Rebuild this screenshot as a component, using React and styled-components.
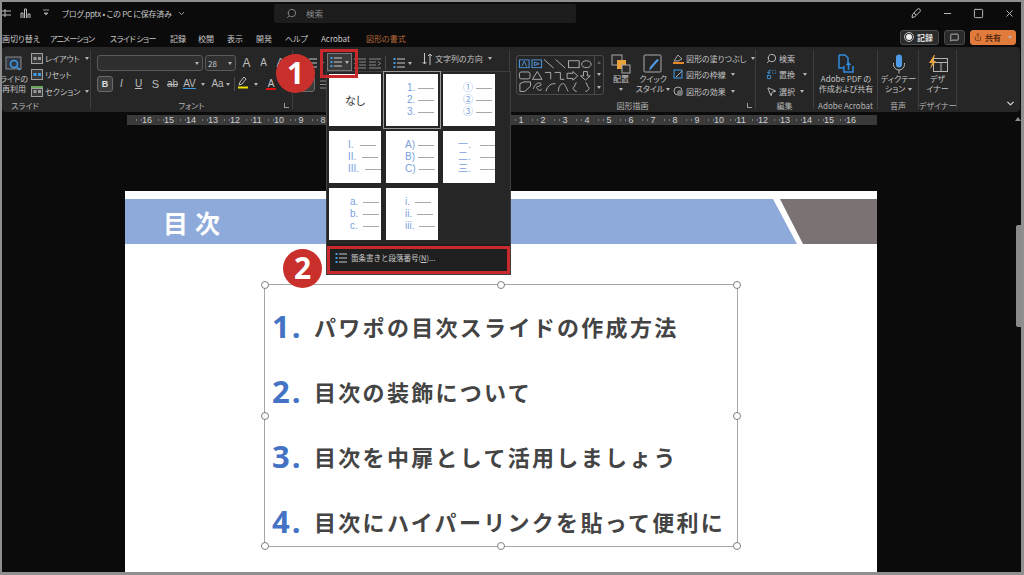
import React from "react";
import styled, { createGlobalStyle } from "styled-components";
import { Search, ChevronDown, Minus, Square, X, MessageSquare, Share, Replace, MousePointer2 } from "lucide-react";

const GlobalStyle = createGlobalStyle`
  html, body {
    margin: 0;
    padding: 0;
    background: #0b0b0b;
    overflow: hidden;
  }
  * { box-sizing: border-box; }
`;

const FONT = `"Noto Sans CJK JP", "Noto Sans", sans-serif`;

const Window = styled.div`
  position: relative;
  width: 1024px;
  height: 575px;
  overflow: hidden;
  background: #0b0b0b;
  border-top: 2px solid #8f8f8f;
  border-left: 2px solid #8f8f8f;
  border-right: 3px solid #8f8f8f;
  border-bottom: 3px solid #8f8f8f;
  color: #cfcfcf;
  font-family: ${FONT};
  font-feature-settings: "palt";
  display: flex;
  flex-direction: column;
`;

const TitleBar = styled.div`
  height: 24px;
  padding-bottom: 2px;
  display: flex;
  align-items: center;
  flex-shrink: 0;
`;
const QuickIcons = styled.div`
  width: 60px;
  display: flex;
  align-items: center;
  gap: 9px;
  color: #bbb;
`;
const DocName = styled.div`
  width: 212px;
  font-size: 8px;
  letter-spacing: -0.25px;
  color: #c8c8c8;
  display: flex;
  align-items: center;
  gap: 5px;
`;
const SearchBox = styled.div`
  width: 302px;
  height: 19px;
  background: #1d1d1d;
  border-radius: 2px;
  display: flex;
  align-items: center;
  gap: 9px;
  padding-left: 12px;
  font-size: 8.5px;
  color: #8a8a8a;
`;
const WindowButtons = styled.div`
  margin-left: auto;
  display: flex;
  align-items: center;
  gap: 20px;
  padding-right: 6px;
  color: #c6c6c6;
`;

const MenuBar = styled.div`
  height: 21px;
  padding-top: 3px;
  flex-shrink: 0;
  display: flex;
  align-items: center;
  font-size: 8px;
`;
const MenuItem = styled.span`
  width: ${(p) => p.$w}px;
  flex-shrink: 0;
  white-space: nowrap;
  letter-spacing: ${(p) => p.$ls || 0}px;
  color: ${(p) => p.$accent || "#c8c8c8"};
`;
const MenuActions = styled.div`
  margin-left: auto;
  display: flex;
  align-items: center;
  gap: 5px;
  padding-right: 5px;
  margin-top: -2px;
`;
const ActionButton = styled.div`
  height: 15px;
  width: ${(p) => p.$w}px;
  border-radius: 3px;
  border: 1px solid ${(p) => (p.$orange ? "#e07b3c" : "#4a4a4a")};
  background: ${(p) => (p.$orange ? "#e07b3c" : "#2a2a2a")};
  color: ${(p) => (p.$orange ? "#5a2c12" : "#ddd")};
  font-size: 8px;
  font-weight: 700;
  display: flex;
  align-items: center;
  justify-content: center;
  gap: 3px;
`;
const RecordDot = styled.span`
  width: 6px;
  height: 6px;
  border-radius: 50%;
  background: #eee;
  outline: 1px solid #bbb;
  outline-offset: 1px;
  margin-right: 2px;
`;

const Ribbon = styled.div`
  height: 65px;
  flex-shrink: 0;
  background: #262626;
  border-radius: 4px;
  margin-right: 1px;
  display: flex;
  align-items: flex-start;
`;
const Group = styled.div`
  width: ${(p) => p.$w}px;
  height: 59px;
  flex-shrink: 0;
  position: relative;
  margin-top: 3px;
  padding: 0 ${(p) => p.$pad ?? 4}px;
  display: flex;
  flex-direction: column;
  border-right: 1px solid #3d3d3d;
`;
const GroupBody = styled.div`
  height: 50px;
  flex-shrink: 0;
  display: flex;
`;
const GroupLabel = styled.div`
  height: 12px;
  font-size: 8px;
  line-height: 12px;
  text-align: center;
  color: #b4b4b4;
  white-space: nowrap;
  width: ${(p) => (p.$w ? `${p.$w}px` : "auto")};
`;
const Launcher = styled.span`
  position: absolute;
  right: 3px;
  bottom: 1px;
  width: 5px;
  height: 5px;
  border-left: 1px solid #9a9a9a;
  border-bottom: 1px solid #9a9a9a;
`;
const Stack = styled.div`
  display: flex;
  flex-direction: column;
  margin-left: ${(p) => p.$ml || 0}px;
`;
const FontRows = styled.div`
  display: flex;
  flex-direction: column;
  gap: 5px;
  padding-top: 5px;
  margin-left: ${(p) => p.$ml || 0}px;
`;
const SmallRow = styled.div`
  height: 16.5px;
  display: flex;
  align-items: center;
  gap: ${(p) => p.$gap ?? 2}px;
  font-size: 8px;
  color: #c4c4c4;
  white-space: nowrap;
`;
const ToolRow = styled.div`
  height: 16px;
  display: flex;
  align-items: center;
  margin-left: ${(p) => p.$ml || 0}px;
  color: #c4c4c4;
  font-size: 8px;
  white-space: nowrap;
`;
const Spacer = styled.span`
  width: ${(p) => p.$w}px;
  flex-shrink: 0;
`;
const BigButton = styled.div`
  width: ${(p) => p.$w}px;
  padding-top: 3px;
  flex-shrink: 0;
  display: flex;
  flex-direction: column;
  align-items: center;
  font-size: 8px;
  line-height: 10px;
  color: #c4c4c4;
  text-align: center;
  white-space: nowrap;
`;
const IconSlot = styled.div`
  height: 21px;
  display: flex;
  align-items: center;
  justify-content: center;
`;
const Caret = styled.span`
  display: inline-block;
  width: 0;
  height: 0;
  vertical-align: middle;
  border-left: 2.5px solid transparent;
  border-right: 2.5px solid transparent;
  border-top: 3px solid #b5b5b5;
  margin-left: ${(p) => p.$ml ?? 3}px;
`;
const Field = styled.div`
  width: ${(p) => p.$w}px;
  height: 16px;
  margin-right: 2px;
  flex-shrink: 0;
  border: 1px solid #5a5a5a;
  border-radius: 3px;
  background: #2e2e2e;
  display: flex;
  align-items: center;
  justify-content: space-between;
  padding: 0 3px 0 2px;
  font-size: 8px;
  color: #c8c8c8;
`;
const ToggleButton = styled.span`
  width: 16px;
  height: 16px;
  flex-shrink: 0;
  border: 1px solid #6b6b6b;
  border-radius: 3px;
  background: #3c3c3c;
  display: flex;
  align-items: center;
  justify-content: center;
  color: #ddd;
  font-family: "Liberation Sans", sans-serif;
  font-size: 9px;
  font-weight: 700;
`;
const ToolCell = styled.span`
  width: ${(p) => p.$w || 17}px;
  flex-shrink: 0;
  text-align: center;
  font-family: "Liberation Sans", sans-serif;
  font-size: ${(p) => p.$size || 10}px;
  font-weight: 400;
  font-style: ${(p) => (p.$italic ? "italic" : "normal")};
  text-decoration: ${(p) => p.$deco || "none"};
  color: #bdbdbd;
  line-height: 12px;
`;
const UnderlinedAV = styled.span`
  border-bottom: 1.5px solid #3f9be6;
  line-height: 9px;
  display: inline-block;
`;
const ColorA = styled.span`
  display: block;
  margin: 0 auto;
  width: 10px;
  font-size: 10px;
  line-height: 9px;
  border-bottom: 2px solid ${(p) => p.$color};
  color: #c8c8c8;
`;
const RowDivider = styled.span`
  width: 1px;
  height: 14px;
  flex-shrink: 0;
  background: #4a4a4a;
  margin: 0 ${(p) => p.$m || 0}px;
`;
const DirectionLabel = styled.span`
  display: flex;
  align-items: center;
  gap: 2px;
  margin: -9px 0 0 2px;
`;
const DirectionIcon = styled.svg`
  margin-top: -9px;
  flex-shrink: 0;
`;
const ShapeGallery = styled.div`
  width: 88px;
  height: 40px;
  margin: 5px 1px 0 2px;
  border: 1px solid #4a4a4a;
  border-radius: 3px;
  display: flex;
  flex-shrink: 0;
`;
const ShapeScroll = styled.div`
  width: 9px;
  margin-left: auto;
  display: grid;
  grid-template-rows: repeat(3, 1fr);
  border-left: 1px solid #4a4a4a;
  justify-items: center;
  align-items: center;
`;

const Ruler = styled.div`
  margin: 3px 0 0 125px;
  width: 750px;
  height: 10px;
  flex-shrink: 0;
  background: #3a3a3a;
  display: flex;
  padding-left: 9px;
  font-family: "Liberation Sans", sans-serif;
  font-size: 9px;
  line-height: 10px;
  color: #cfcfcf;
`;
const RulerCell = styled.span`
  width: 22px;
  flex-shrink: 0;
  text-align: center;
  position: relative;
  &::before,
  &::after {
    content: "";
    position: absolute;
    top: 4px;
    width: 1px;
    height: 2px;
    background: #7a7a7a;
  }
  &::before { left: 0; }
  &::after { left: 5px; }
`;

const Stage = styled.div`
  flex: 1;
  min-height: 0;
  padding: 66px 0 0 123px;
  overflow: hidden;
`;
const Slide = styled.div`
  width: 752px;
  height: 400px;
  background: #fff;
  padding-top: 8px;
  font-feature-settings: normal;
`;
const Band = styled.div`
  height: 45px;
  display: flex;
`;
const BlueBar = styled.div`
  flex: 1;
  background: #8eaadb;
  clip-path: polygon(0 0, calc(100% - 24px) 0, 100% 100%, 0 100%);
  color: #fff;
  font-size: 25px;
  font-weight: 700;
  letter-spacing: 7px;
  line-height: 47px;
  padding-left: 38px;
`;
const GrayBar = styled.div`
  width: 97px;
  margin-left: -17px;
  background: #7b7373;
  clip-path: polygon(0 0, 100% 0, 100% 100%, 23px 100%);
`;
const TextBox = styled.div`
  position: relative;
  width: 474px;
  height: 263px;
  margin: 40px 0 0 139px;
  border: 1px solid #a6a6a6;
  display: flex;
  flex-direction: column;
  padding: 8px 0 0 7px;
`;
const TocRow = styled.div`
  height: 65px;
  flex-shrink: 0;
  display: flex;
  align-items: center;
`;
const TocNumber = styled.span`
  width: 42px;
  flex-shrink: 0;
  font-family: "Open Sans", sans-serif;
  font-weight: 700;
  font-size: 31px;
  letter-spacing: 2px;
  color: #4472c4;
`;
const TocText = styled.span`
  font-size: 22px;
  font-weight: 700;
  letter-spacing: 2.3px;
  color: #444;
  white-space: nowrap;
`;
const Handle = styled.span`
  position: absolute;
  width: 8px;
  height: 8px;
  border-radius: 50%;
  background: #fff;
  border: 1px solid #7f7f7f;
  left: ${(p) => p.$x};
  top: ${(p) => p.$y};
  transform: translate(-50%, -50%);
`;

const Scrollbar = styled.div`
  position: absolute;
  right: 0;
  top: 223px;
  width: 5px;
  height: 102px;
  border-radius: 2px 0 0 2px;
  background: #8a8a8a;
`;
const ScrollArrow = styled.span`
  position: absolute;
  right: 0;
  top: 115px;
  width: 0;
  height: 0;
  border-left: 3px solid transparent;
  border-right: 3px solid transparent;
  border-bottom: 4px solid #8a8a8a;
`;
const CollapseButton = styled.span`
  margin: 51px 4px 0 auto;
  color: #cfcfcf;
  display: flex;
`;

/* overlays */
const Marker = styled.div`
  position: absolute;
  left: ${(p) => p.$x}px;
  top: ${(p) => p.$y}px;
  width: 39px;
  height: 39px;
  border-radius: 50%;
  background: #c9302c;
  color: #fff;
  font-family: "Open Sans", sans-serif;
  font-weight: 700;
  font-size: 30px;
  line-height: 38px;
  text-align: center;
`;
const Highlight = styled.div`
  position: absolute;
  left: ${(p) => p.$x}px;
  top: ${(p) => p.$y}px;
  width: ${(p) => p.$w}px;
  height: ${(p) => p.$h}px;
  border: 3px solid #c9282d;
  pointer-events: none;
`;
const NumberingButton = styled.div`
  position: absolute;
  left: 325px;
  top: 51px;
  width: 25px;
  height: 18px;
  background: #3a3a3a;
  border: 1px solid #777;
  display: flex;
  align-items: center;
  justify-content: center;
`;
const Dropdown = styled.div`
  position: absolute;
  left: 324px;
  top: 69px;
  width: 185px;
  height: 204px;
  background: #262626;
  border: 1px solid #3f3f3f;
  display: flex;
  flex-direction: column;
`;
const DropdownGrid = styled.div`
  display: grid;
  grid-template-columns: repeat(3, 52px);
  grid-auto-rows: 52px;
  gap: 5px;
  padding: 2px 0 0 2px;
`;
const Option = styled.div`
  background: #fff;
  display: flex;
  flex-direction: column;
  justify-content: center;
  gap: 2px;
  align-items: ${(p) => (p.$none ? "center" : "flex-start")};
  padding-left: ${(p) => (p.$none ? 0 : p.$pad)}px;
  outline: ${(p) => (p.$active ? "1px solid #9a9a9a" : "none")};
  outline-offset: 2px;
  font-size: ${(p) => (p.$none ? 11 : 10)}px;
  color: #333;
  overflow: hidden;
`;
const OptionLine = styled.div`
  display: flex;
  align-items: center;
  height: 10px;
  gap: ${(p) => p.$gap}px;
  color: #7a9fe0;
  font-family: "Liberation Sans", "Noto Sans CJK JP", sans-serif;
  font-size: 10px;
  line-height: 10px;
  white-space: nowrap;
  &::after {
    content: "";
    width: 16px;
    height: 1px;
    background: #a8a8a8;
    flex-shrink: 0;
  }
`;
const DropdownFooter = styled.div`
  height: 27px;
  margin-top: auto;
  margin-bottom: 3px;
  padding-left: 8px;
  display: flex;
  align-items: center;
  gap: 4px;
  font-size: 7.5px;
  color: #c9c9c9;
  background: #1f1f1f;
  font-feature-settings: normal;
`;

function ListIcon() {
  return (
    <svg width="12" height="12" viewBox="0 0 12 12">
      {[2, 6, 10].map((y) => (
        <g key={y}>
          <rect x="0.5" y={y - 1} width="2" height="2" fill="#3f9be6" />
          <rect x="4" y={y - 0.5} width="8" height="1" fill="#c8c8c8" />
        </g>
      ))}
    </svg>
  );
}

function IndentIcon({ flip }) {
  return (
    <svg width="12" height="11" viewBox="0 0 12 11" style={{ transform: flip ? "scaleX(-1)" : "none" }}>
      <path d="M0 1h12M5 4h7M5 7h7M0 10h12" stroke="#8a8a8a" />
      <path d="M3 3.500L0.500 5.500 3 7.500" fill="none" stroke="#8a8a8a" />
    </svg>
  );
}

function SlideGlyph({ color = "#9a9a9a", bar }) {
  return (
    <svg width="12" height="11" viewBox="0 0 12 11">
      {bar && <rect width="12" height="2" fill={bar} />}
      <rect x="0.500" y={bar ? 2.5 : 0.5} width="11" height={bar ? 8 : 10} fill="#3a3a3a" stroke="#a0a0a0" />
      <rect x="2.500" y="4" width="3" height="3" fill={color} />
      <rect x="7" y="4" width="3" height="3" fill={color} />
    </svg>
  );
}

function ShapesIcon() {
  return (
    <svg width="78" height="38" viewBox="0 0 80 44" preserveAspectRatio="none" fill="none" stroke="#b6b6b6" strokeWidth="1">
      <rect x="2.500" y="4.500" width="10" height="9" stroke="#4f9be6" />
      <path d="M5 12l2.500-6 2.500 6" stroke="#4f9be6" />
      <rect x="15.500" y="4.500" width="10" height="9" stroke="#4f9be6" />
      <path d="M18 7l5 2-5 2z" stroke="#4f9be6" />
      <path d="M28 4l10 10M40 4l10 10" />
      <rect x="53.500" y="5.500" width="11" height="8" />
      <ellipse cx="72" cy="9.500" rx="5" ry="4" />
      <rect x="2.500" y="18.500" width="11" height="8" rx="2" />
      <path d="M16 27l5-9 5 9z" />
      <path d="M29 19h6v8M39 19h6v8h4" />
      <path d="M52 20h6v-2l5 5-5 5v-2h-6z" />
      <path d="M69 18h4v5h3l-5 5-5-5h3z" />
      <path d="M3 41v-9l4-2h7v5l-6 6z" />
      <path d="M17 38c2-8 8-8 8-5s-7 1-4 5 5 0 5 0" />
      <path d="M30 41c2-8 6-9 10-9M43 41c0-7 3-9 5-9s3 5 5 9" />
      <path d="M62 31c-3 0-1 5-3 5s0 5 3 5M71 31c3 0 1 5 3 5s0 5-3 5" />
    </svg>
  );
}

const menuItems = [
  ["画切り替え", 48, 0],
  ["アニメーション", 60, -0.8],
  ["スライド ショー", 60, -0.6],
  ["記録", 28, 0],
  ["校閲", 29, 0],
  ["表示", 29, 0],
  ["開発", 29, 0],
  ["ヘルプ", 36, 0],
  ["Acrobat", 45, 0],
];

const optionRows = [
  { items: ["1.", "2.", "3."], pad: 21, gap: 3, active: true },
  { items: ["①", "②", "③"], pad: 20, gap: 3 },
  { items: ["I.", "II.", "III."], pad: 19, gap: 6 },
  { items: ["A)", "B)", "C)"], pad: 19, gap: 3 },
  { items: ["一.", "二.", "三."], pad: 15, gap: 9 },
  { items: ["a.", "b.", "c."], pad: 21, gap: 5 },
  { items: ["i.", "ii.", "iii."], pad: 19, gap: 5 },
];

const tocItems = [
  "パワポの目次スライドの作成方法",
  "目次の装飾について",
  "目次を中扉として活用しましょう",
  "目次にハイパーリンクを貼って便利に",
];

const rulerLabels = [16, 15, 14, 13, 12, 11, 10, 9, 8, 7, 6, 5, 4, 3, 2, 1, "", 1, 2, 3, 4, 5, 6, 7, 8, 9, 10, 11, 12, 13, 14, 15, 16];

const handles = [
  ["0", "0"],
  ["50%", "0"],
  ["100%", "0"],
  ["0", "50%"],
  ["100%", "50%"],
  ["0", "100%"],
  ["50%", "100%"],
  ["100%", "100%"],
];

export default function App() {
  return (
    <Window>
      <GlobalStyle />
      <TitleBar>
        <QuickIcons>
          <svg width="9" height="10" viewBox="0 0 9 10">
            <path d="M0 3h9M0 7h9M3 1v8" stroke="#bbb" />
          </svg>
          <svg width="11" height="11" viewBox="0 0 11 11">
            <path d="M1 10V5h2v5M4.500 10V1h2v9M8 10V6h2v4" fill="none" stroke="#bbb" />
          </svg>
          <svg width="6" height="8" viewBox="0 0 6 8" style={{ marginLeft: 3 }}>
            <path d="M0 1h6M1 4l2 2 2-2z" stroke="#999" fill="#999" />
          </svg>
        </QuickIcons>
        <DocName>
          ブログ.pptx • この PC に保存済み
          <ChevronDown size={9} />
        </DocName>
        <SearchBox>
          <Search size={11} style={{ transform: "scaleX(-1)" }} />
          検索
        </SearchBox>
        <WindowButtons>
          <svg width="12" height="12" viewBox="0 0 12 12" fill="none" stroke="#c6c6c6">
            <path d="M2.500 7.500L7.500 2a1.800 1.800 0 0 1 2.500 2.500L4.500 10 2 10.500z" />
            <path d="M4 6l2 2" />
          </svg>
          <Minus size={11} />
          <Square size={11} />
          <X size={11} />
        </WindowButtons>
      </TitleBar>

      <MenuBar>
        {menuItems.map(([label, w, ls]) => (
          <MenuItem key={label} $w={w} $ls={ls}>{label}</MenuItem>
        ))}
        <MenuItem $w={60} $accent="#b5693a">図形の書式</MenuItem>
        <MenuActions>
          <ActionButton $w={39}><RecordDot />記録</ActionButton>
          <ActionButton $w={21}><MessageSquare size={9} /></ActionButton>
          <ActionButton $w={46} $orange><Share size={8} />共有<Caret $ml={4} /></ActionButton>
        </MenuActions>
      </MenuBar>

      <Ribbon>
        <Group $w={89} $pad={0}>
          <GroupBody>
            <BigButton $w={24}>
              <IconSlot>
                <svg width="18" height="18" viewBox="0 0 18 18">
                  <rect x="1" y="2" width="15" height="12" fill="#2f3a46" stroke="#8a8a8a" />
                  <circle cx="9" cy="9" r="3.500" fill="none" stroke="#3f9be6" strokeWidth="1.500" />
                  <path d="M12 12l3 3" stroke="#3f9be6" strokeWidth="1.500" />
                </svg>
              </IconSlot>
              <span>ライドの</span>
              <span>再利用</span>
            </BigButton>
            <Stack $ml={5}>
              <SmallRow><SlideGlyph />レイアウト<Caret /></SmallRow>
              <SmallRow><SlideGlyph color="#3f9be6" />リセット</SmallRow>
              <SmallRow><SlideGlyph bar="#6aa55a" />セクション<Caret /></SmallRow>
            </Stack>
          </GroupBody>
          <GroupLabel $w={46}>スライド</GroupLabel>
        </Group>

        <Group $w={202} $pad={0}>
          <GroupBody>
            <FontRows $ml={6}>
              <ToolRow>
                <Field $w={106}><span /><Caret /></Field>
                <Field $w={31}>28<Caret /></Field>
                <ToolCell $size={12}>A</ToolCell>
                <ToolCell $size={10}>A</ToolCell>
                <ToolCell $size={12}>A</ToolCell>
              </ToolRow>
              <ToolRow>
                <ToggleButton>B</ToggleButton>
                <ToolCell $italic>I</ToolCell>
                <ToolCell $deco="underline">U</ToolCell>
                <ToolCell $size={11}>S</ToolCell>
                <ToolCell $deco="line-through">ab</ToolCell>
                <ToolCell><UnderlinedAV>AV</UnderlinedAV></ToolCell>
                <ToolCell $w={9}><Caret $ml={0} /></ToolCell>
                <ToolCell $w={27}>Aa<Caret $ml={2} /></ToolCell>
                <RowDivider />
                <ToolCell $w={16}>
                  <svg width="12" height="13" viewBox="0 0 12 13">
                    <path d="M2 9l1-3 4-5 2 2-4 5z" fill="none" stroke="#bdbdbd" />
                    <rect x="1" y="10.500" width="10" height="2" fill="#f2e100" />
                  </svg>
                </ToolCell>
                <ToolCell $w={10}><Caret $ml={0} /></ToolCell>
                <ToolCell $w={20}><ColorA $color="#e01010">A</ColorA></ToolCell>
              </ToolRow>
            </FontRows>
          </GroupBody>
          <GroupLabel>フォント</GroupLabel>
          <Launcher />
        </Group>

        <Group $w={217} $pad={0}>
          <GroupBody>
            <FontRows $ml={12}>
              <ToolRow>
                <ListIcon />
                <Caret />
                <Spacer $w={30} />
                <IndentIcon />
                <Spacer $w={3} />
                <IndentIcon flip />
                <RowDivider $m={4} />
                <Spacer $w={3} />
                <ListIcon />
                <Caret />
                <Spacer $w={10} />
                <DirectionIcon width="11" height="14" viewBox="0 0 11 14">
                  <path d="M2.500 1v11M0.500 10l2 2 2-2M8 13V2M6 4l2-2 2 2" fill="none" stroke="#c4c4c4" />
                </DirectionIcon>
                <DirectionLabel>文字列の方向<Caret /></DirectionLabel>
              </ToolRow>
              <ToolRow $ml={-6}>
                <ToggleButton />
                <Spacer $w={5} />
                <svg width="7" height="9" viewBox="0 0 7 9">
                  <path d="M0 1h7M0 4.500h7M0 8h7" stroke="#8a8a8a" />
                </svg>
              </ToolRow>
            </FontRows>
          </GroupBody>
        </Group>

        <Group $w={246}>
          <GroupBody>
            <ShapeGallery>
              <ShapesIcon />
              <ShapeScroll>
                <Caret $ml={0} style={{ transform: "rotate(180deg)", opacity: 0.4 }} />
                <Caret $ml={0} />
                <Caret $ml={0} />
              </ShapeScroll>
            </ShapeGallery>
            <BigButton $w={32}>
              <IconSlot>
                <svg width="20" height="20" viewBox="0 0 20 20">
                  <rect x="1" y="1" width="10" height="10" fill="#2a2a2a" stroke="#aaa" />
                  <rect x="6" y="6" width="9" height="9" fill="#e8a33c" />
                  <rect x="11" y="11" width="8" height="8" fill="#2a2a2a" stroke="#aaa" />
                </svg>
              </IconSlot>
              <span>配置</span>
              <span><Caret $ml={0} /></span>
            </BigButton>
            <BigButton $w={32}>
              <IconSlot>
                <svg width="20" height="20" viewBox="0 0 20 20">
                  <rect x="1" y="1" width="17" height="17" rx="1" fill="none" stroke="#aaa" />
                  <path d="M16 6l-7 8-3 3 1-4 7-8z" fill="#4f9be6" />
                </svg>
              </IconSlot>
              <span>クイック</span>
              <span>スタイル<Caret $ml={2} /></span>
            </BigButton>
            <Stack $ml={4}>
              <SmallRow>
                <svg width="11" height="11" viewBox="0 0 11 11">
                  <path d="M1 8l4-6 4 4-4 2z" fill="none" stroke="#aaa" />
                  <rect y="9" width="11" height="2" fill="#e8862c" />
                </svg>
                図形の塗りつぶし<Caret />
              </SmallRow>
              <SmallRow>
                <svg width="11" height="11" viewBox="0 0 11 11">
                  <rect x="1" y="1" width="8" height="8" fill="none" stroke="#3f9be6" />
                  <path d="M3 8l6-6" stroke="#aaa" />
                </svg>
                図形の枠線<Caret />
              </SmallRow>
              <SmallRow>
                <svg width="11" height="11" viewBox="0 0 11 11">
                  <circle cx="5" cy="5" r="4" fill="none" stroke="#aaa" />
                  <circle cx="7" cy="7" r="3" fill="#777" />
                </svg>
                図形の効果<Caret />
              </SmallRow>
            </Stack>
          </GroupBody>
          <GroupLabel>図形描画</GroupLabel>
          <Launcher />
        </Group>

        <Group $w={58}>
          <GroupBody>
            <Stack $ml={6}>
              <SmallRow><Search size={11} style={{ transform: "scaleX(-1)" }} />検索</SmallRow>
              <SmallRow><Replace size={11} color="#3f9be6" />置換<Caret $ml={6} /></SmallRow>
              <SmallRow><MousePointer2 size={11} />選択<Caret /></SmallRow>
            </Stack>
          </GroupBody>
          <GroupLabel>編集</GroupLabel>
        </Group>

        <Group $w={64}>
          <GroupBody>
            <BigButton $w={56}>
              <IconSlot>
                <svg width="18" height="20" viewBox="0 0 18 20" fill="none" stroke="#2f8be0" strokeWidth="1.500">
                  <path d="M2 1h6l3 3v5M2 1v13h4" />
                  <path d="M7 12v6h9v-6M11.500 16v-7M9.500 11l2-2 2 2" />
                </svg>
              </IconSlot>
              <span>Adobe PDF の</span>
              <span>作成および共有</span>
            </BigButton>
          </GroupBody>
          <GroupLabel>Adobe Acrobat</GroupLabel>
        </Group>

        <Group $w={41}>
          <GroupBody>
            <BigButton $w={33}>
              <IconSlot>
                <svg width="14" height="20" viewBox="0 0 14 20" fill="none">
                  <rect x="4" y="0.500" width="6" height="13" rx="3" fill="#4f9be6" />
                  <path d="M1.500 9v1.500a5.500 5.500 0 0 0 11 0V9M7 16v3.500" stroke="#b5b5b5" />
                </svg>
              </IconSlot>
              <span>ディクテー</span>
              <span>ション<Caret /></span>
            </BigButton>
          </GroupBody>
          <GroupLabel>音声</GroupLabel>
        </Group>

        <Group $w={38} $pad={0}>
          <GroupBody>
            <BigButton $w={37}>
              <IconSlot>
                <svg width="20" height="18" viewBox="0 0 20 18">
                  <rect x="5.500" y="3.500" width="14" height="13" fill="none" stroke="#b5b5b5" />
                  <path d="M5.500 7.500h14M13 7.500v9" stroke="#b5b5b5" />
                  <path d="M6 0L1 8h3l-2 6 6-8H5l2-6z" fill="#e8a33c" />
                </svg>
              </IconSlot>
              <span>デザ</span>
              <span>イナー</span>
            </BigButton>
          </GroupBody>
          <GroupLabel>デザイナー</GroupLabel>
        </Group>

        <CollapseButton><ChevronDown size={11} strokeWidth={3} /></CollapseButton>
      </Ribbon>

      <Ruler>
        {rulerLabels.map((label, i) => (
          <RulerCell key={i}>{label}</RulerCell>
        ))}
      </Ruler>

      <Stage>
        <Slide>
          <Band>
            <BlueBar>目次</BlueBar>
            <GrayBar />
          </Band>
          <TextBox>
            {tocItems.map((text, i) => (
              <TocRow key={text}>
                <TocNumber>{i + 1}.</TocNumber>
                <TocText>{text}</TocText>
              </TocRow>
            ))}
            {handles.map(([x, y]) => (
              <Handle key={x + y} $x={x} $y={y} />
            ))}
          </TextBox>
        </Slide>
      </Stage>

      <ScrollArrow />
      <Scrollbar />

      <Dropdown>
        <DropdownGrid>
          <Option $none>なし</Option>
          {optionRows.map((opt) => (
            <Option key={opt.items[0]} $pad={opt.pad} $active={opt.active}>
              {opt.items.map((item) => (
                <OptionLine key={item} $gap={opt.gap}>{item}</OptionLine>
              ))}
            </Option>
          ))}
        </DropdownGrid>
        <DropdownFooter>
          <ListIcon />
          <span>箇条書きと段落番号(<u>N</u>)...</span>
        </DropdownFooter>
      </Dropdown>

      <NumberingButton>
        <ListIcon />
        <Caret />
      </NumberingButton>
      <Highlight $x={318} $y={47} $w={38} $h={29} />
      <Highlight $x={325} $y={244} $w={183} $h={28} />
      <Marker $x={274} $y={52}>1</Marker>
      <Marker $x={281} $y={247}>2</Marker>
    </Window>
  );
}
